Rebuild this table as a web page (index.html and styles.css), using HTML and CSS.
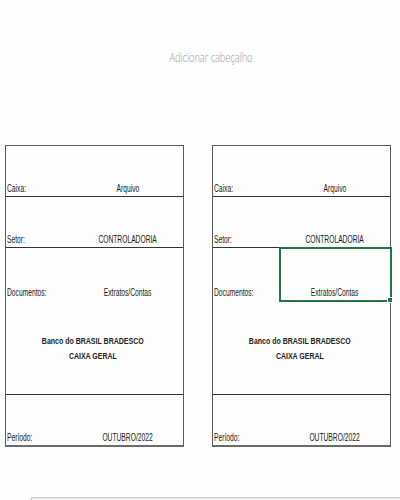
FILE: index.html
```html
<!DOCTYPE html>
<html lang="pt-BR">
<head>
<meta charset="utf-8">
<title>Capa</title>
<link rel="stylesheet" href="styles.css">
</head>
<body>
<header class="page-header"><span class="hdr-text">Adicionar cabeçalho</span></header>
<main class="sheets">
  <section class="sheet">
    <div class="row"><span class="label"><span class="sx">Caixa:</span></span><span class="value"><span class="sx">Arquivo</span></span></div>
    <div class="row"><span class="label"><span class="sx">Setor:</span></span><span class="value"><span class="sx">CONTROLADORIA</span></span></div>
    <div class="row tall">
      <div class="subrow"><span class="label"><span class="sx">Documentos:</span></span><span class="value"><span class="sx">Extratos/Contas</span></span></div>
      <div class="bank"><span class="bx">Banco do BRASIL BRADESCO</span><span class="bx">CAIXA GERAL</span></div>
    </div>
    <div class="row"><span class="label"><span class="sx">Período:</span></span><span class="value"><span class="sx">OUTUBRO/2022</span></span></div>
  </section>
  <section class="sheet">
    <div class="row"><span class="label"><span class="sx">Caixa:</span></span><span class="value"><span class="sx">Arquivo</span></span></div>
    <div class="row"><span class="label"><span class="sx">Setor:</span></span><span class="value"><span class="sx">CONTROLADORIA</span></span></div>
    <div class="row tall">
      <div class="subrow"><span class="label"><span class="sx">Documentos:</span></span><span class="value selected"><span class="sx">Extratos/Contas</span></span></div>
      <div class="bank"><span class="bx">Banco do BRASIL BRADESCO</span><span class="bx">CAIXA GERAL</span></div>
    </div>
    <div class="row"><span class="label"><span class="sx">Período:</span></span><span class="value"><span class="sx">OUTUBRO/2022</span></span></div>
  </section>
</main>
<footer class="scrollbar"></footer>
</body>
</html>
```

FILE: styles.css
```css
html, body {
  margin: 0;
  padding: 0;
}
body {
  width: 400px;
  height: 500px;
  overflow: hidden;
  background: #fcfdfc;
  font-family: "Liberation Sans", Arial, sans-serif;
  color: #1a1a1a;
}
.page-header {
  height: 145px;
  box-sizing: border-box;
  padding-top: 48px;
  display: flex;
  justify-content: center;
  padding-left: 22px;
}
.hdr-text {
  display: inline-block;
  font-family: "Open Sans", sans-serif;
  font-weight: 300;
  font-size: 13.5px;
  line-height: 18px;
  color: #9a9a9a;
  transform: scaleX(0.68);
  transform-origin: center;
  white-space: nowrap;
}
.sheets {
  display: flex;
  gap: 28px;
  padding-left: 5px;
}
.sheet {
  width: 179px;
  box-sizing: border-box;
  border: 1px solid #5a5a5a;
  border-bottom: 2px solid #6a6a6a;
  display: flex;
  flex-direction: column;
}
.row {
  height: 50px;
  border-bottom: 1px solid #333;
  display: grid;
  grid-template-columns: 66px 1fr;
  align-items: end;
}
.row:last-child {
  border-bottom: none;
}
.row.tall {
  height: 146px;
  display: flex;
  flex-direction: column;
  align-items: stretch;
}
.subrow {
  height: 52px;
  display: grid;
  grid-template-columns: 66px 1fr;
  align-items: end;
}
.label, .value {
  font-size: 10px;
  line-height: 12px;
  padding-bottom: 1px;
  white-space: nowrap;
}
.label {
  padding-left: 1px;
}
.value {
  text-align: center;
}
.sx {
  display: inline-block;
  transform: scaleX(0.67);
}
.label .sx {
  transform-origin: left center;
}
.value .sx {
  transform-origin: center;
}
.value.selected {
  position: relative;
  height: 100%;
  display: flex;
  align-items: flex-end;
  justify-content: center;
  box-sizing: border-box;
}
.value.selected::after {
  content: "";
  position: absolute;
  left: 0;
  right: -2px;
  top: -1px;
  bottom: -2px;
  border: 2px solid #217346;
}
.value.selected::before {
  content: "";
  position: absolute;
  right: -3px;
  bottom: -3px;
  width: 4px;
  height: 4px;
  background: #217346;
  border: 1px solid #fff;
  z-index: 1;
}
.bank {
  padding-top: 33px;
  display: flex;
  flex-direction: column;
  align-items: center;
  padding-right: 4px;
}
.bx {
  display: inline-block;
  font-weight: bold;
  font-size: 9.6px;
  line-height: 15px;
  color: #222;
  transform: scaleX(0.73);
  white-space: nowrap;
}
.scrollbar {
  margin-top: 50px;
  margin-left: 31px;
  height: 4px;
  border-top: 1px solid #c9c9c9;
  border-left: 1px solid #c9c9c9;
  background: #eeeeee;
}
```
